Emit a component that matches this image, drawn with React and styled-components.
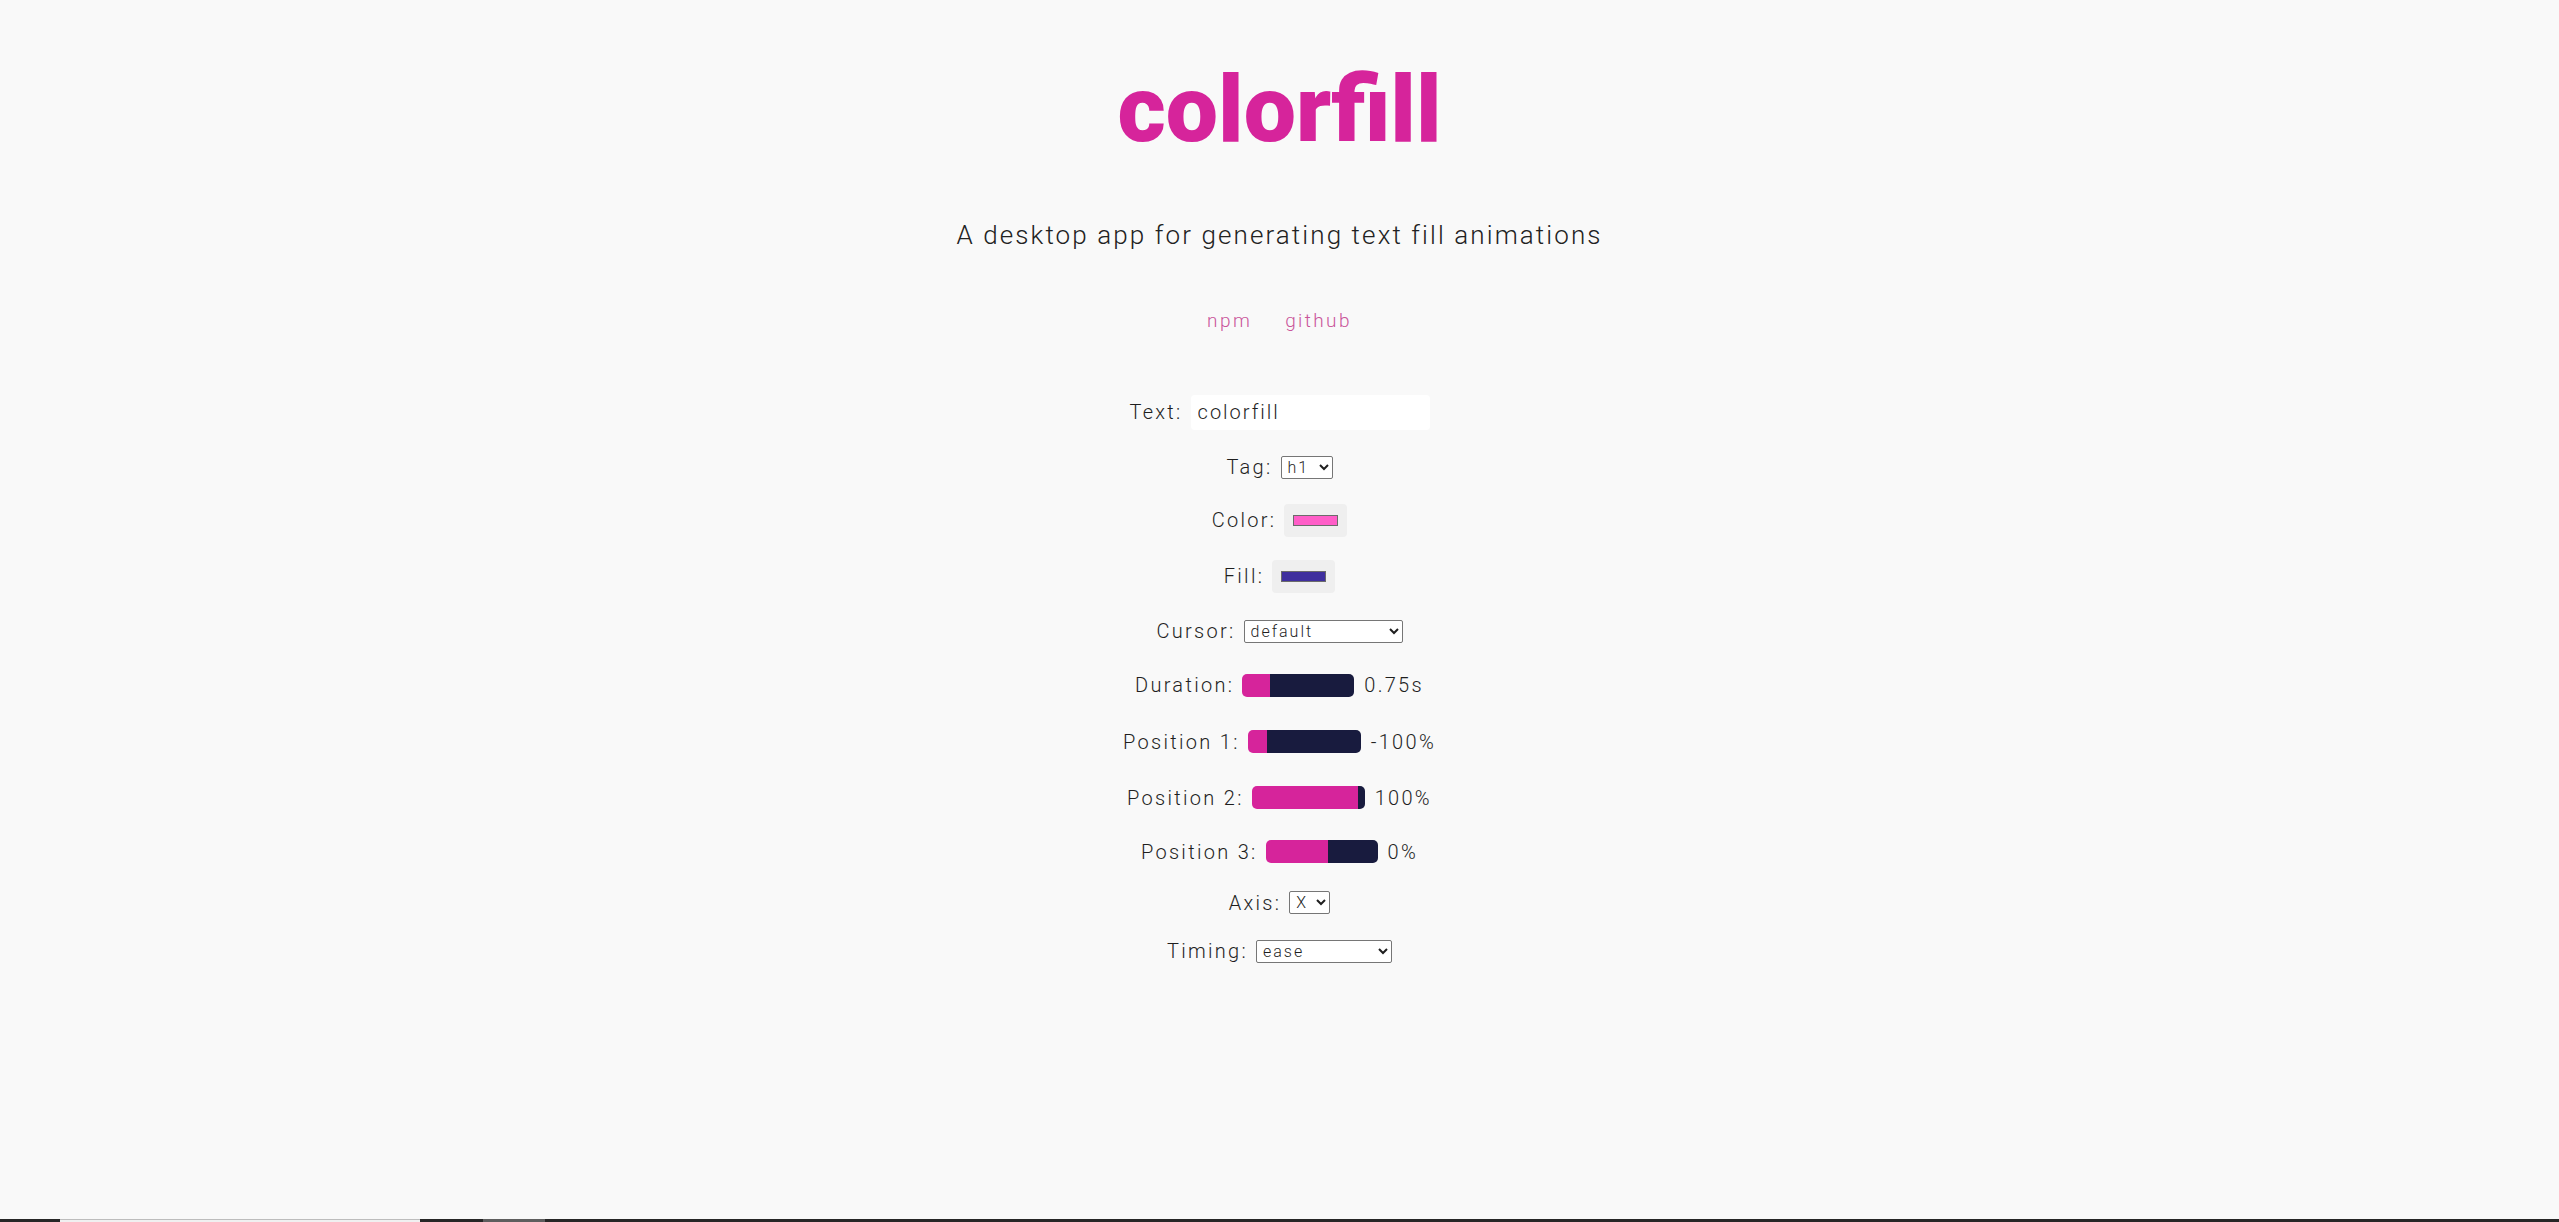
import React, { useState } from "react";
import styled, { createGlobalStyle } from "styled-components";

const GlobalStyle = createGlobalStyle`
  html, body {
    margin: 0;
    padding: 0;
    background: #f9f9f9;
    font-family: Roboto, "Open Sans", sans-serif;
    color: #333;
  }
`;

const Page = styled.div`
  min-height: 100vh;
  display: flex;
  flex-direction: column;
  align-items: center;
  box-sizing: border-box;
  padding-top: 63px;
`;

const Title = styled.h1`
  margin: 0;
  font-size: 93px;
  line-height: 93px;
  font-weight: 900;
  color: #d6249b;
`;

const Subtitle = styled.p`
  margin: 66px 0 0;
  font-size: 26px;
  line-height: 26px;
  font-weight: 300;
  letter-spacing: 2.1px;
  color: #222;
`;

const Links = styled.nav`
  margin-top: 63px;
  display: flex;
  gap: 33px;
`;

const LinkItem = styled.a`
  font-size: 19px;
  line-height: 19px;
  font-weight: 300;
  letter-spacing: 2.4px;
  color: #c9559a;
  text-decoration: none;
`;

const Form = styled.form`
  margin-top: 53px;
  display: flex;
  flex-direction: column;
  align-items: center;
`;

// rows are not all the same height in the original, slider rows sit a bit looser
const Row = styled.div`
  height: ${(p) => p.$h || 54}px;
  display: flex;
  align-items: center;
  justify-content: center;
  gap: 8px;
`;

const Label = styled.label`
  font-size: 20px;
  font-weight: 300;
  letter-spacing: 2.3px;
  color: #1f1f1f;
`;

const Value = styled.span`
  font-size: 20px;
  font-weight: 300;
  letter-spacing: 2.3px;
  color: #1f1f1f;
  margin-left: 2px;
`;

const TextInput = styled.input`
  box-sizing: border-box;
  width: 239px;
  height: 35px;
  border: none;
  border-radius: 4px;
  background: #fff;
  padding: 0 7px;
  font-family: inherit;
  font-size: 20px;
  font-weight: 300;
  letter-spacing: 2px;
  color: #1f1f1f;
  outline: none;
`;

const Select = styled.select`
  box-sizing: border-box;
  width: ${(p) => p.$w}px;
  height: 23px;
  border: 1px solid #767676;
  border-radius: 2px;
  background: #fff;
  font-family: inherit;
  font-size: 16px;
  font-weight: 300;
  letter-spacing: 2px;
  color: #1f1f1f;
  padding: 0 2px;
`;

const ColorInput = styled.input`
  -webkit-appearance: none;
  appearance: none;
  box-sizing: border-box;
  width: 63px;
  height: 33px;
  border: none;
  border-radius: 4px;
  background: #efefef;
  padding: 11px 9px;
  cursor: pointer;
  &::-webkit-color-swatch-wrapper {
    padding: 0;
  }
  &::-webkit-color-swatch {
    border: 1px solid #6b6b6b;
    border-radius: 0;
  }
`;

const Range = styled.input`
  -webkit-appearance: none;
  appearance: none;
  margin: 0;
  width: ${(p) => p.$w}px;
  height: 23px;
  border-radius: 5px;
  outline: none;
  &::-webkit-slider-thumb {
    -webkit-appearance: none;
    appearance: none;
    width: 0;
    height: 23px;
  }
`;

const BottomBar = styled.div`
  margin-top: auto;
  align-self: stretch;
  height: 3px;
  background: #262626;
  display: flex;
`;

const BarSegment = styled.div`
  height: 3px;
  width: ${(p) => p.$w}px;
  margin-left: ${(p) => p.$ml}px;
  background: ${(p) => p.$bg};
  box-sizing: border-box;
  border-top: ${(p) => (p.$line ? "1px solid #bdbdbd" : "none")};
`;

function Slider({ label, min, max, step, value, onChange, width, unit, pct, h }) {
  const p = pct != null ? pct : ((value - min) / (max - min)) * 100;
  return (
    <Row $h={h}>
      <Label>{label}:</Label>
      <Range
        type="range"
        $w={width}
        min={min}
        max={max}
        step={step}
        value={value}
        onChange={(e) => onChange(Number(e.target.value))}
        style={{
          background: `linear-gradient(to right, #d6249b 0%, #d6249b ${p}%, #181b3e ${p}%, #181b3e 100%)`,
        }}
      />
      <Value>
        {value}
        {unit}
      </Value>
    </Row>
  );
}

export default function App() {
  let [text, setText] = useState("colorfill");
  let [tag, setTag] = useState("h1");
  let [color, setColor] = useState("#ff5ec8");
  let [fill, setFill] = useState("#3f2f9e");
  let [cursor, setCursor] = useState("default");
  let [duration, setDuration] = useState(0.75);
  let [pos1, setPos1] = useState(-100);
  let [pos2, setPos2] = useState(100);
  let [pos3, setPos3] = useState(0);
  let [axis, setAxis] = useState("X");
  let [timing, setTiming] = useState("ease");

  return (
    <Page>
      <GlobalStyle />
      <Title>colorfill</Title>
      <Subtitle>A desktop app for generating text fill animations</Subtitle>
      <Links>
        <LinkItem href="#">npm</LinkItem>
        <LinkItem href="#">github</LinkItem>
      </Links>

      <Form onSubmit={(e) => e.preventDefault()}>
        <Row $h={58}>
          <Label>Text:</Label>
          <TextInput value={text} onChange={(e) => setText(e.target.value)} />
        </Row>
        <Row $h={52}>
          <Label>Tag:</Label>
          <Select $w={52} value={tag} onChange={(e) => setTag(e.target.value)}>
            {["h1", "h2", "h3", "h4", "h5", "h6", "p"].map((t) => (
              <option key={t}>{t}</option>
            ))}
          </Select>
        </Row>
        <Row $h={54}>
          <Label>Color:</Label>
          <ColorInput type="color" value={color} onChange={(e) => setColor(e.target.value)} />
        </Row>
        <Row $h={58}>
          <Label>Fill:</Label>
          <ColorInput type="color" value={fill} onChange={(e) => setFill(e.target.value)} />
        </Row>
        <Row $h={52}>
          <Label>Cursor:</Label>
          <Select $w={159} value={cursor} onChange={(e) => setCursor(e.target.value)}>
            {["default", "pointer", "crosshair", "text", "wait", "help", "not-allowed", "context-menu"].map((c) => (
              <option key={c}>{c}</option>
            ))}
          </Select>
        </Row>
        <Slider label="Duration" h={56} min={0} max={3} step={0.05} value={duration} onChange={setDuration} width={112} unit="s" />
        <Slider label="Position 1" h={57} min={-150} max={150} step={1} value={pos1} onChange={setPos1} width={113} unit="%" pct={17} />
        <Slider label="Position 2" h={55} min={-150} max={150} step={1} value={pos2} onChange={setPos2} width={113} unit="%" pct={94} />
        <Slider label="Position 3" h={53} min={-150} max={150} step={1} value={pos3} onChange={setPos3} width={112} unit="%" pct={55} />
        <Row $h={49}>
          <Label>Axis:</Label>
          <Select $w={41} value={axis} onChange={(e) => setAxis(e.target.value)}>
            <option>X</option>
            <option>Y</option>
          </Select>
        </Row>
        <Row $h={48}>
          <Label>Timing:</Label>
          <Select $w={136} value={timing} onChange={(e) => setTiming(e.target.value)}>
            {["ease", "linear", "ease-in", "ease-out", "ease-in-out"].map((t) => (
              <option key={t}>{t}</option>
            ))}
          </Select>
        </Row>
      </Form>

      <BottomBar>
        <BarSegment $ml={60} $w={360} $bg="#f0f0f0" $line />
        <BarSegment $ml={63} $w={62} $bg="#5e5e5e" />
      </BottomBar>
    </Page>
  );
}
